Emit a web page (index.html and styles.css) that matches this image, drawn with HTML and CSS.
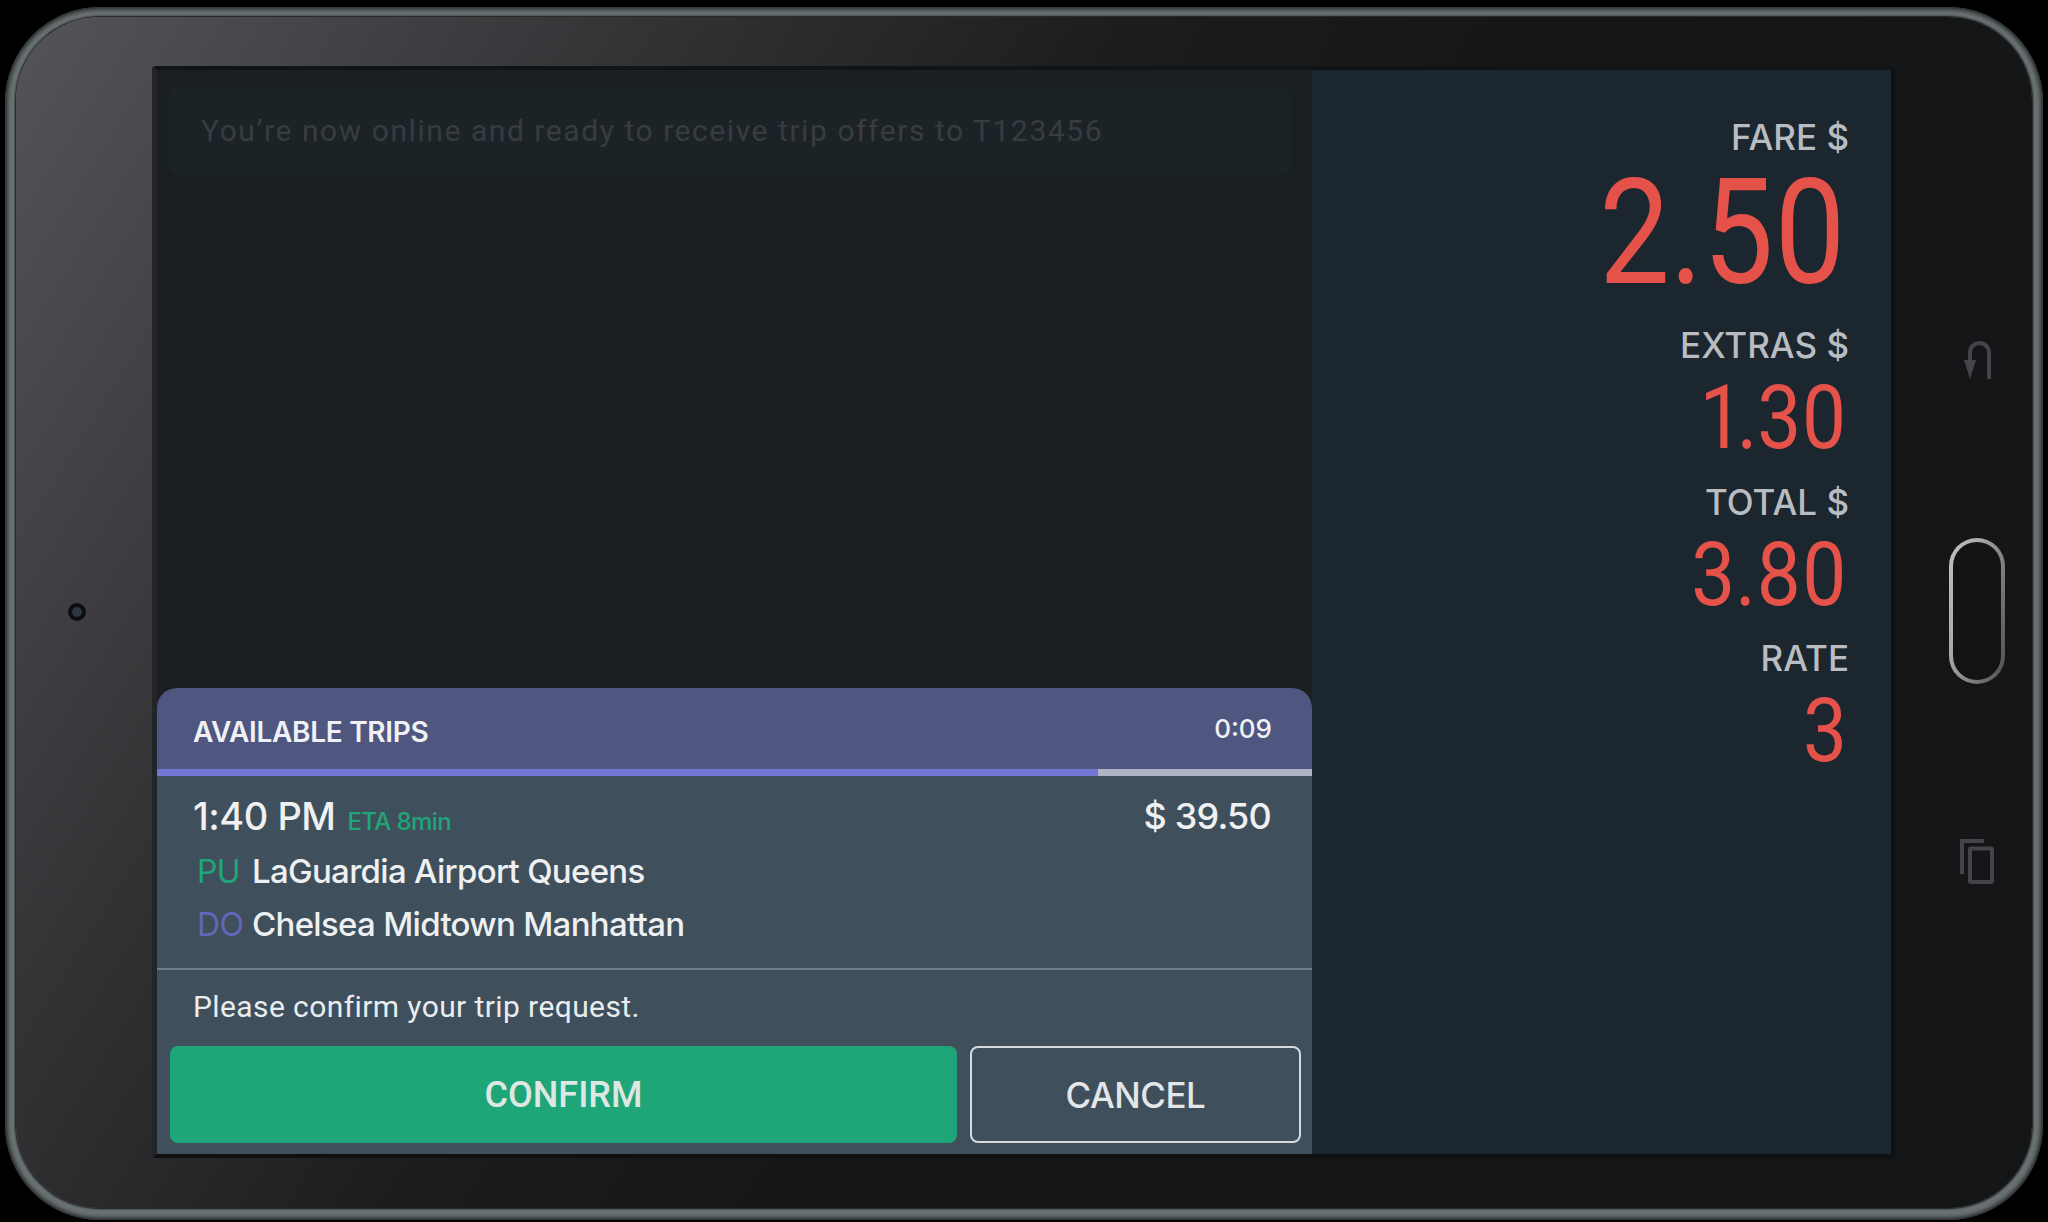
FILE: index.html
```html
<!DOCTYPE html>
<html lang="en">
<head>
<meta charset="utf-8">
<title>Available trips</title>
<link rel="stylesheet" href="styles.css">
</head>
<body>
<div class="device">
  <div class="bezel">
    <div class="side side-left"><span class="camera"></span></div>
    <main class="screen">
      <section class="panel">
        <div class="banner">You’re now online and ready to receive trip offers to T123456</div>
        <div class="modal">
          <header class="modal-head">
            <span class="modal-title">AVAILABLE TRIPS</span>
            <span class="modal-timer">0:09</span>
          </header>
          <div class="progress"><div class="progress-fill" style="width:81.5%"></div></div>
          <div class="trip">
            <div class="trip-top">
              <div><span class="trip-time">1:40 PM</span><span class="trip-eta">ETA 8min</span></div>
              <span class="trip-price">$ 39.50</span>
            </div>
            <div class="stop stop-first"><span class="stop-tag tag-pu">PU</span><span class="stop-name">LaGuardia Airport Queens</span></div>
            <div class="stop"><span class="stop-tag tag-do">DO</span><span class="stop-name">Chelsea Midtown Manhattan</span></div>
          </div>
          <p class="prompt">Please confirm your trip request.</p>
          <div class="actions">
            <button class="btn btn-confirm">CONFIRM</button>
            <button class="btn btn-cancel">CANCEL</button>
          </div>
        </div>
      </section>
      <aside class="meter">
        <div class="label label-first">FARE $</div>
        <div class="value value-large">2.50</div>
        <div class="label label-second">EXTRAS $</div>
        <div class="value">1.30</div>
        <div class="label">TOTAL $</div>
        <div class="value">3.80</div>
        <div class="label">RATE</div>
        <div class="value">3</div>
      </aside>
    </main>
    <div class="side side-right">
      <svg class="nav-back" width="28" height="38" viewBox="0 0 28 38" fill="none">
        <path class="nav-stroke" d="M26 38V11.500a9.500 9.500 0 0 0-19 0V22"/>
        <polygon class="nav-fill" points="1,19 13,19 7,38"/>
      </svg>
      <div class="nav-home"></div>
      <svg class="nav-recent" width="34" height="45" viewBox="0 0 34 45" fill="none">
        <path class="nav-stroke" d="M24 2H2V35"/>
        <rect class="nav-stroke" x="10" y="9.500" width="22" height="33.500" rx="1"/>
      </svg>
    </div>
  </div>
</div>
</body>
</html>
```

FILE: styles.css
```css
* { box-sizing: border-box; }

html, body { margin: 0; background: #000; }

body { width: 2048px; height: 1222px; padding: 7px 5px 2px; font-family: "Inter", "Liberation Sans", sans-serif; }

.device {
  width: 2038px;
  height: 1213px;
  padding: 10px 11px 12px;
  border-radius: 95px;
  background: #6a7172;
  box-shadow: inset 0 0 4px 2px #1e2122;
}

.bezel {
  display: flex;
  height: 100%;
  border-radius: 84px;
  background: linear-gradient(122deg, #555559 0%, #333336 23%, #1c1c1e 41%, #151618 55%, #141517 100%);
  box-shadow: 0 0 2px 1px #111;
}

.side { display: flex; }

.side-left { flex: 0 0 136px; align-items: center; justify-content: center; padding: 0 14px 2px 0; }

.camera {
  width: 18px;
  height: 18px;
  border-radius: 50%;
  background: #2a3641;
  border: 4px solid #0c0e10;
}

.side-right { flex: 0 0 137px; flex-direction: column; align-items: center; padding: 324px 0 0 27px; }

.nav-stroke { stroke: #444548; stroke-width: 4; }
.nav-fill { fill: #444548; }

.nav-home {
  width: 56px;
  height: 146px;
  margin: 159px 0 155px;
  border: 4px solid transparent;
  border-radius: 28px;
  background: linear-gradient(#121315, #121315) padding-box, linear-gradient(105deg, #c2c2c2 0%, #a8a8a8 35%, #4c4c4c 100%) border-box;
}

.screen {
  flex: 1;
  display: flex;
  margin: 49px 0 50px;
  border: 4px solid #0e1012;
  border-top-color: #111315;
  border-left: 5px solid #232425;
  border-radius: 4px;
  background: #1c262e;
  overflow: hidden;
}

.panel {
  flex: 0 0 1155px;
  display: flex;
  flex-direction: column;
  background: #1a1f24;
}

.banner {
  height: 88px;
  margin: 17px 21px 0 12px;
  padding-left: 32px;
  border-radius: 10px;
  background: #1c2327;
  color: #383c40;
  font-family: "Roboto", sans-serif;
  font-size: 30px;
  line-height: 88px;
  letter-spacing: 1.56px;
}

.modal { margin-top: auto; }

.modal-head {
  display: flex;
  justify-content: space-between;
  height: 81px;
  padding: 0 40px 0 36px;
  border-radius: 20px 20px 0 0;
  background: #4f5680;
  color: #f0f1f4;
}

.modal-title { padding-top: 24px; font-size: 28px; font-weight: 600; line-height: 40px; letter-spacing: -0.3px; }
.modal-timer { padding-top: 21px; font-size: 26px; font-weight: 500; line-height: 40px; }

.progress { height: 7px; background: #b0b3c6; }
.progress-fill { height: 100%; background: #7177d2; }

.trip {
  padding: 14px 41px 17px 36px;
  border-bottom: 2px solid #6d7d89;
  background: #3f4f5b;
  color: #eef0f2;
}

.trip-top { display: flex; justify-content: space-between; height: 53px; line-height: 53px; }
.trip-time { font-size: 38px; font-weight: 500; letter-spacing: -0.5px; }
.trip-eta { margin-left: 12px; color: #1fa678; font-size: 24px; font-weight: 500; letter-spacing: -0.6px; }
.trip-price { font-size: 36px; font-weight: 500; letter-spacing: -0.8px; }

.stop { display: flex; font-size: 33px; line-height: 53px; letter-spacing: -0.7px; }
.stop-first { margin-top: 2px; }
.stop-tag { flex: 0 0 59px; padding-left: 4px; font-size: 32px; }
.tag-pu { color: #1fa678; }
.tag-do { color: #6068b8; }
.stop-name { font-weight: 500; }

.prompt {
  margin: 0;
  padding: 17px 40px 19px 36px;
  background: #3f4f5b;
  color: #e9edf0;
  font-family: "Roboto", sans-serif;
  font-size: 30px;
  line-height: 40px;
  letter-spacing: 0.4px;
}

.actions {
  display: grid;
  grid-template-columns: 787px 331px;
  column-gap: 13px;
  padding: 0 0 11px 13px;
  background: #3f4f5b;
}

.btn { height: 97px; padding: 0; border-radius: 8px; cursor: pointer; }

.btn-confirm { border: 0; background: #1fa678; color: #dfe7e3; font-family: "Roboto", sans-serif; font-size: 36px; font-weight: 500; }

.btn-cancel { border: 2px solid #d5dbe0; background: transparent; color: #e3e7ea; font-family: "Inter", sans-serif; font-size: 35px; font-weight: 500; letter-spacing: -0.5px; }

.meter { flex: 1; display: flex; flex-direction: column; align-items: flex-end; padding: 0 42px 0 0; }

.label { margin-top: 31.5px; color: #b9bcc0; font-size: 35px; font-weight: 500; line-height: 40px; }
.label-first { margin-top: 47px; }
.label-second { margin-top: 39px; }

/* No seven-segment font is installed, so the meter keeps real text in Roboto, narrowed to the display's proportions. */
.value {
  margin: 21px 2px 0 0;
  color: #e4524a;
  font-family: "Roboto", sans-serif;
  font-size: 89px;
  font-variant-numeric: proportional-nums;
  line-height: 64px;
  transform: scaleX(0.88);
  transform-origin: right center;
}

.value-large { margin-top: 25px; font-size: 146px; line-height: 104px; transform: scaleX(0.86); }
```
